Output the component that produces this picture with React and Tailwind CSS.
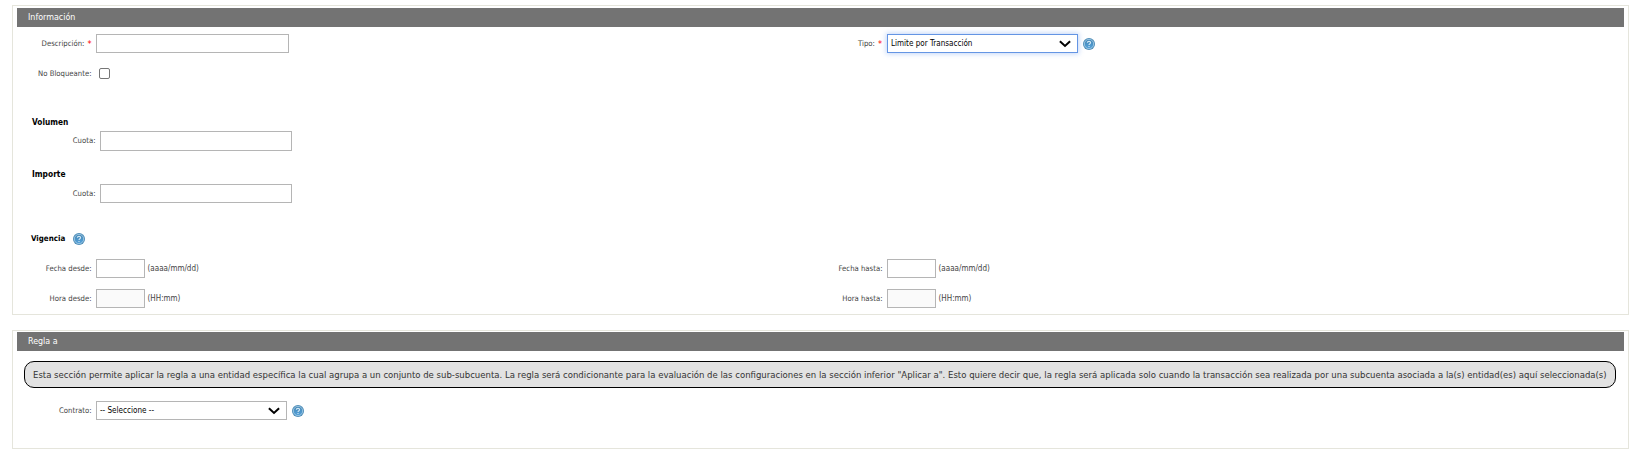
function HelpIcon({ className = '' }) {
  return (
    <svg viewBox="0 0 12 12" className={`h-3 w-3 shrink-0 ${className}`} aria-hidden="true">
      <defs>
        <linearGradient id="help-fill" x1="0" y1="0" x2="0" y2="1">
          <stop offset="0" stopColor="#4485b3" />
          <stop offset="1" stopColor="#55a3dc" />
        </linearGradient>
      </defs>
      <circle cx="6" cy="6" r="6" fill="#4a8ab6" />
      <circle cx="6" cy="6" r="4.7" fill="url(#help-fill)" stroke="#a3cbe4" strokeWidth="0.9" />
      <path d="M4.3 4.8C4.4 2.8 7.7 2.9 7.6 4.8C7.5 5.8 6 5.7 6 7.1M6 8V9" fill="none" stroke="#d3e8f5" strokeWidth="1.1" />
    </svg>
  );
}

function Label({ children, required, className }) {
  return (
    <div className={`flex shrink-0 justify-end whitespace-pre text-[7.7px] text-[#444] ${className}`}>
      {children}
      {required && <span className="ml-[3px] text-[9px] text-[#f00]">*</span>}
    </div>
  );
}

function Field({ className, disabled }) {
  return (
    <input
      type="text"
      disabled={disabled}
      className={`block shrink-0 rounded-none border border-[#b5b5b5] outline-none ${disabled ? 'bg-[#fafafa]' : 'bg-white'} ${className}`}
    />
  );
}

function Select({ value, focused }) {
  return (
    <div
      className={`flex h-[19px] w-[191px] shrink-0 items-center justify-between border bg-white pr-[6px] pl-[3px] text-[8.05px] text-black ${
        focused ? 'border-[#6495e4] shadow-[0_0_5px_1px_rgba(100,149,237,0.38)]' : 'border-[#b5b5b5]'
      }`}
    >
      <span className="pt-px whitespace-pre">{value}</span>
      <svg viewBox="0 0 12 8" className="h-2 w-3" aria-hidden="true">
        <path d="M0.9 1.3L6 6L11.1 1.3" fill="none" stroke="#000" strokeWidth="2" />
      </svg>
    </div>
  );
}

function Panel({ title, className, children }) {
  return (
    <section className={`w-[1617px] shrink-0 border border-[#e5e5dc] px-1 ${className}`}>
      <h2 className="flex h-[19px] items-center bg-[#737373] pb-px pl-[11px] text-[8.85px] text-white">{title}</h2>
      {children}
    </section>
  );
}

function Row({ left, right, className }) {
  return (
    <div className={`grid grid-cols-[791px_1fr] ${className}`}>
      <div className="flex items-center">{left}</div>
      <div className="flex items-center">{right}</div>
    </div>
  );
}

function TimeField({ label, hint, disabled }) {
  return (
    <>
      <Label className="w-[74.5px]">{label}</Label>
      <Field className="ml-[4.5px] h-[19px] w-[49px]" disabled={disabled} />
      <span className="ml-[2.5px] text-[8px] text-[#444]">{hint}</span>
    </>
  );
}

export default function App() {
  return (
    <main className="flex h-[456px] flex-col bg-white pt-[5px] pl-3 font-['DejaVu_Sans_Condensed','DejaVu_Sans',sans-serif] leading-[12px]">
      <Panel title="Información" className="h-[310px] pt-[2px]">
        <Row
          className="mt-[7px] h-[19px]"
          left={
            <>
              <Label className="w-[74.5px]" required>Descripción:</Label>
              <Field className="ml-[4.5px] h-[19px] w-[193px]" />
            </>
          }
          right={
            <>
              <Label className="w-[74px]" required>Tipo:</Label>
              <div className="ml-[5px] flex items-center">
                <Select value="Limite por Transacción" focused />
                <HelpIcon className="ml-[5px]" />
              </div>
            </>
          }
        />
        <div className="mt-[15px] flex h-[11px] items-center">
          <Label className="w-[74.5px]">No Bloqueante:</Label>
          <input type="checkbox" className="ml-[7.5px] block h-[11px] w-[11px] appearance-none rounded-[2px] border border-[#767676] bg-white" />
        </div>
        <h3 className="mt-9 ml-[15px] h-3 pt-px text-[8.25px] font-bold text-black">Volumen</h3>
        <div className="mt-1 flex h-5 items-center">
          <Label className="w-[78.5px]">Cuota:</Label>
          <Field className="ml-[4.5px] h-5 w-[192px]" />
        </div>
        <h3 className="mt-4 ml-[15px] h-3 pt-px text-[8.35px] font-bold text-black">Importe</h3>
        <div className="mt-[5px] flex h-[19px] items-center">
          <Label className="w-[78.5px]">Cuota:</Label>
          <Field className="ml-[4.5px] h-[19px] w-[192px]" />
        </div>
        <div className="mt-[30px] flex h-3 items-center">
          <h3 className="ml-[14px] w-[42px] text-[7.9px] font-bold text-black">Vigencia</h3>
          <HelpIcon />
        </div>
        <Row
          className="mt-[14px] h-[19px]"
          left={<TimeField label="Fecha desde:" hint="(aaaa/mm/dd)" />}
          right={<TimeField label="Fecha hasta:" hint="(aaaa/mm/dd)" />}
        />
        <Row
          className="mt-[11px] h-[19px]"
          left={<TimeField label="Hora desde:" hint="(HH:mm)" disabled />}
          right={<TimeField label="Hora hasta:" hint="(HH:mm)" disabled />}
        />
      </Panel>

      <Panel title="Regla a" className="mt-[15px] h-[119px] pt-px">
        <p className="mt-[10px] ml-[7px] flex h-[27px] w-[1592px] items-center rounded-[10px] border border-black bg-[#e2e2e2] pl-2 text-[9.495px] whitespace-nowrap text-[#333]">
          Esta sección permite aplicar la regla a una entidad específica la cual agrupa a un conjunto de sub-subcuenta. La regla será condicionante para la evaluación de las configuraciones en la sección inferior "Aplicar a". Esto quiere decir que, la regla será aplicada solo cuando la transacción sea realizada por una subcuenta asociada a la(s) entidad(es) aquí seleccionada(s)
        </p>
        <div className="mt-[13px] flex h-[19px] items-center">
          <Label className="w-[74.5px]">Contrato:</Label>
          <div className="ml-[4.5px] flex items-center">
            <Select value="-- Seleccione --" />
            <HelpIcon className="ml-[5px]" />
          </div>
        </div>
      </Panel>
    </main>
  );
}
